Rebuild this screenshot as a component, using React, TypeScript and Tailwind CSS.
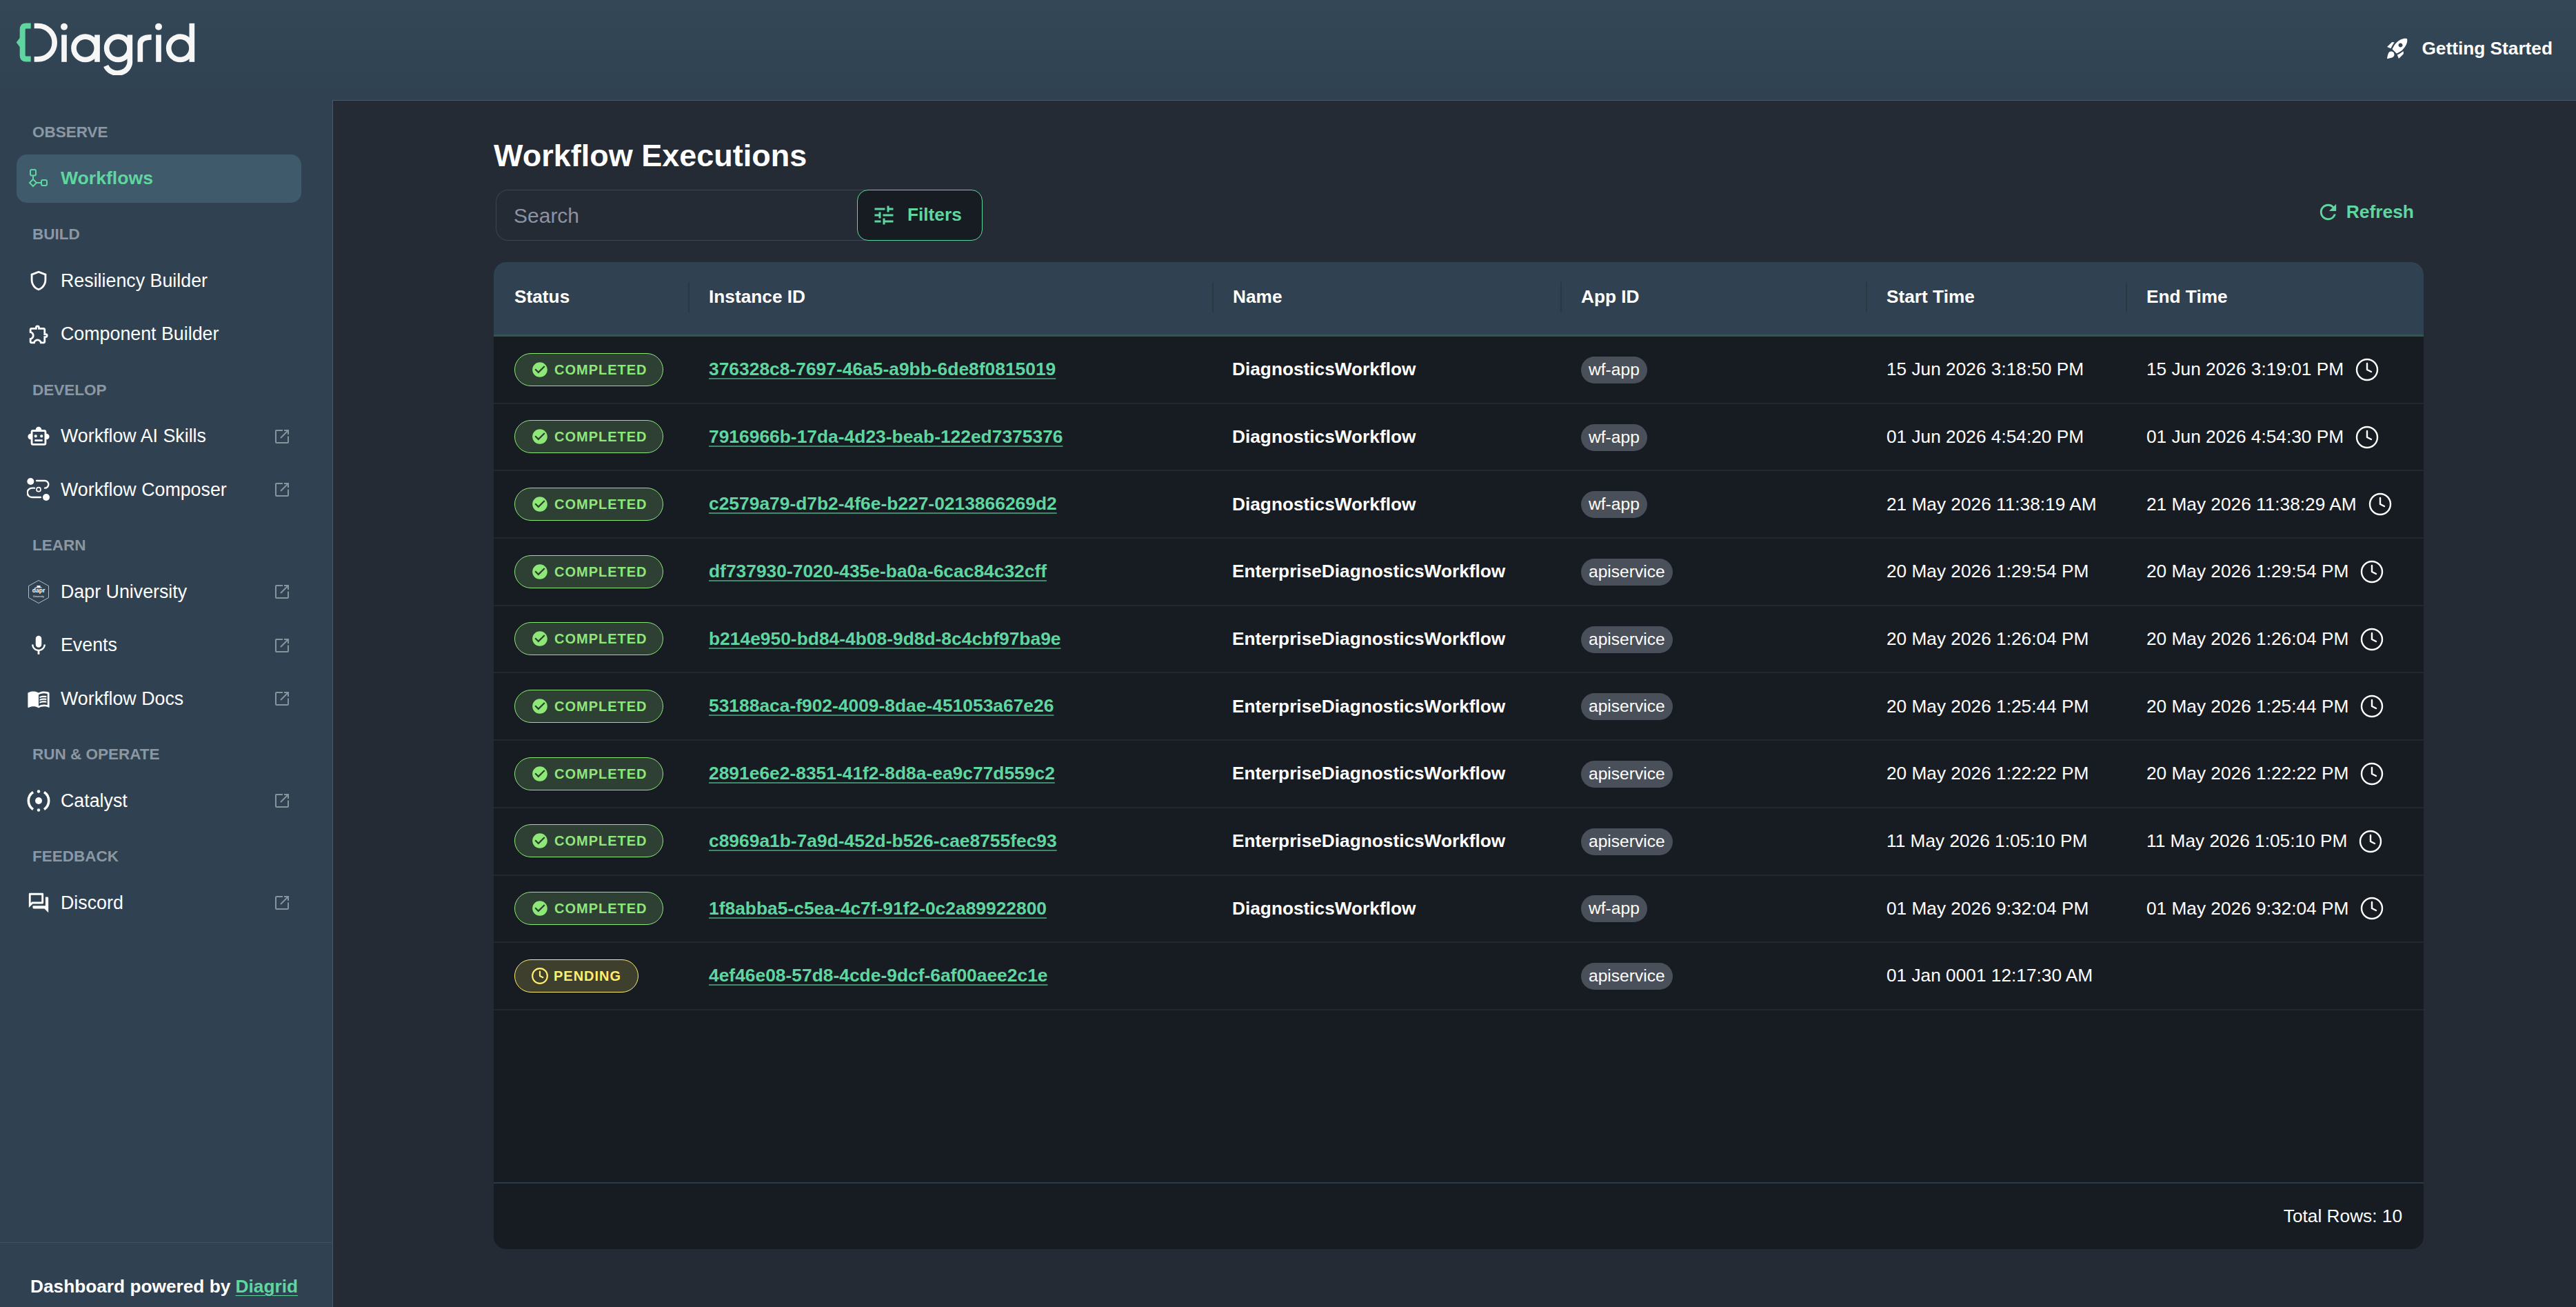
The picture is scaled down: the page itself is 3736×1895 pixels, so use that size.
import type { ReactNode } from "react"
import { Clock } from "lucide-react"
import {
  MdCheckCircle,
  MdMenuBook,
  MdMic,
  MdOutlineExtension,
  MdOutlineForum,
  MdOutlineShield,
  MdOutlineSmartToy,
  MdRefresh,
  MdRocketLaunch,
  MdTune,
} from "react-icons/md"

function DiagridLogo() {
  return (
    <svg width="262" height="77" viewBox="70 95 786 230" fill="none">
      {/* brace */}
      <path d="M135 111 H115 Q99 111 99 127 V239 Q99 255 115 255 H135" stroke="#5fd6a0" strokeWidth="24" />
      <path d="M72 183 L90 160 V206 Z" fill="#5fd6a0" />
      {/* wordmark */}
      <g stroke="#f6f6f6" strokeWidth="23">
        <path d="M150 111 H166 A72 72 0 0 1 166 256 H150" />
        <path d="M280 150 V268" />
        <circle cx="372" cy="208" r="50" />
        <path d="M424 150 V268" />
        <circle cx="515" cy="208" r="50" />
        <path d="M566 150 V262 A54 50 0 0 1 462 285" />
        <path d="M611 268 V190 Q611 160 660 160" />
        <path d="M691 150 V268" />
        <circle cx="785" cy="208" r="50" />
        <path d="M836 100 V268" />
      </g>
      <circle cx="280" cy="115" r="15" fill="#f6f6f6" />
      <circle cx="691" cy="115" r="15" fill="#f6f6f6" />
    </svg>
  )
}

function FlowIcon() {
  return (
    <svg width="30" height="30" viewBox="0 0 30 30" fill="none" stroke="#5fd6a0" strokeWidth="2">
      <rect x="3" y="2" width="8" height="8.5" rx="2" />
      <path d="M7 10.5 V16 M7 16 L12 21 L7 26 L2 21 Z M12 21 H19" />
      <rect x="19" y="17" width="8" height="8" rx="2" />
    </svg>
  )
}

function ComposerIcon() {
  return (
    <svg width="34" height="34" viewBox="0 0 102 102" fill="none" stroke="white" strokeWidth="7" strokeLinecap="round">
      <circle cx="16" cy="15" r="15" fill="white" stroke="none" />
      <circle cx="84" cy="84" r="15" fill="white" stroke="none" />
      <circle cx="51" cy="50" r="9" strokeWidth="5" />
      <path d="M42 12 H78 A16 16 0 0 1 78 44" />
      <path d="M60 84 H22 A19 19 0 0 1 22 44 H33" />
    </svg>
  )
}

function DaprIcon() {
  return (
    <svg width="30" height="34" viewBox="0 0 30 34" fill="none">
      <path d="M15 .5 L29.5 8.5 V25.5 L15 33.5 L.5 25.5 V8.5 Z" stroke="#d5dade" strokeWidth=".8" />
      <rect x="12.5" y="8" width="5" height="2.6" fill="white" />
      <rect x="10.5" y="10.4" width="9" height="1" fill="white" />
      <text x="15" y="18" textAnchor="middle" fontSize="8.5" fontWeight="700" fill="white" fontFamily="'Liberation Sans', sans-serif">dapr</text>
      <text x="15" y="24.5" textAnchor="middle" fontSize="3.6" fill="white" fontFamily="'Liberation Sans', sans-serif">University</text>
    </svg>
  )
}

function CatalystIcon() {
  return (
    <svg width="34" height="34" viewBox="0 0 34 34" fill="none" stroke="white" strokeWidth="3.6">
      <path d="M9 4.5 A15 15 0 0 0 9 29.5" />
      <path d="M25 4.5 A15 15 0 0 1 25 29.5" />
      <circle cx="17" cy="17" r="5" fill="white" stroke="none" />
      <circle cx="17" cy="3.5" r="2.2" fill="white" stroke="none" />
      <circle cx="17" cy="30.5" r="2.2" fill="white" stroke="none" />
    </svg>
  )
}

function ExternalIcon() {
  return (
    <svg width="20" height="20" viewBox="0 0 20 20" fill="none" stroke="#87939d" strokeWidth="2" className="ml-auto mr-[18px] shrink-0">
      <path d="M11 1 H2 A1 1 0 0 0 1 2 V18 A1 1 0 0 0 2 19 H18 A1 1 0 0 0 19 18 V9.5" />
      <path d="M8 12 L18.5 1.5 M13 1 H19 V7" />
    </svg>
  )
}

type NavItem = { label: string; icon: ReactNode; external?: boolean; active?: boolean }

const nav: { title: string; items: NavItem[] }[] = [
  { title: "OBSERVE", items: [{ label: "Workflows", icon: <FlowIcon />, active: true }] },
  {
    title: "BUILD",
    items: [
      { label: "Resiliency Builder", icon: <MdOutlineShield size={34} /> },
      { label: "Component Builder", icon: <MdOutlineExtension size={33} /> },
    ],
  },
  {
    title: "DEVELOP",
    items: [
      { label: "Workflow AI Skills", icon: <MdOutlineSmartToy size={36} />, external: true },
      { label: "Workflow Composer", icon: <ComposerIcon />, external: true },
    ],
  },
  {
    title: "LEARN",
    items: [
      { label: "Dapr University", icon: <DaprIcon />, external: true },
      { label: "Events", icon: <MdMic size={34} />, external: true },
      { label: "Workflow Docs", icon: <MdMenuBook size={34} />, external: true },
    ],
  },
  { title: "RUN & OPERATE", items: [{ label: "Catalyst", icon: <CatalystIcon />, external: true }] },
  { title: "FEEDBACK", items: [{ label: "Discord", icon: <MdOutlineForum size={34} />, external: true }] },
]

const rows = [
  ["376328c8-7697-46a5-a9bb-6de8f0815019", "DiagnosticsWorkflow", "wf-app", "15 Jun 2026 3:18:50 PM", "15 Jun 2026 3:19:01 PM"],
  ["7916966b-17da-4d23-beab-122ed7375376", "DiagnosticsWorkflow", "wf-app", "01 Jun 2026 4:54:20 PM", "01 Jun 2026 4:54:30 PM"],
  ["c2579a79-d7b2-4f6e-b227-0213866269d2", "DiagnosticsWorkflow", "wf-app", "21 May 2026 11:38:19 AM", "21 May 2026 11:38:29 AM"],
  ["df737930-7020-435e-ba0a-6cac84c32cff", "EnterpriseDiagnosticsWorkflow", "apiservice", "20 May 2026 1:29:54 PM", "20 May 2026 1:29:54 PM"],
  ["b214e950-bd84-4b08-9d8d-8c4cbf97ba9e", "EnterpriseDiagnosticsWorkflow", "apiservice", "20 May 2026 1:26:04 PM", "20 May 2026 1:26:04 PM"],
  ["53188aca-f902-4009-8dae-451053a67e26", "EnterpriseDiagnosticsWorkflow", "apiservice", "20 May 2026 1:25:44 PM", "20 May 2026 1:25:44 PM"],
  ["2891e6e2-8351-41f2-8d8a-ea9c77d559c2", "EnterpriseDiagnosticsWorkflow", "apiservice", "20 May 2026 1:22:22 PM", "20 May 2026 1:22:22 PM"],
  ["c8969a1b-7a9d-452d-b526-cae8755fec93", "EnterpriseDiagnosticsWorkflow", "apiservice", "11 May 2026 1:05:10 PM", "11 May 2026 1:05:10 PM"],
  ["1f8abba5-c5ea-4c7f-91f2-0c2a89922800", "DiagnosticsWorkflow", "wf-app", "01 May 2026 9:32:04 PM", "01 May 2026 9:32:04 PM"],
  ["4ef46e08-57d8-4cde-9dcf-6af00aee2c1e", "", "apiservice", "01 Jan 0001 12:17:30 AM", ""],
]

const columns = ["Status", "Instance ID", "Name", "App ID", "Start Time", "End Time"]
const gridCols = "grid grid-cols-[282px_760px_505px_443px_377px_432px]"

function StatusPill({ pending }: { pending: boolean }) {
  if (pending) {
    return (
      <span className="inline-flex h-[48px] w-[180px] items-center gap-[7px] rounded-full border border-[#ffee70] bg-[#3f3f2e] pl-[23px] text-[20px] font-bold tracking-[1px] text-[#ffee70]">
        <Clock size={26} strokeWidth={2} className="shrink-0" />
        PENDING
      </span>
    )
  }
  return (
    <span className="inline-flex h-[48px] w-[216px] items-center gap-[8px] rounded-full border border-[#8de878] bg-[#2e3f33] pl-[23px] text-[20px] font-bold tracking-[1px] text-[#8de878]">
      <MdCheckCircle size={26} className="shrink-0" />
      COMPLETED
    </span>
  )
}

export default function App() {
  return (
    <div className="flex h-screen flex-col overflow-hidden bg-[#304251] font-['Liberation_Sans',Arial,sans-serif] text-white">
      <header className="flex h-[145px] shrink-0 items-start justify-between bg-gradient-to-b from-[#334756] to-[#304251]">
        <div className="pl-[23px] pt-[32px]">
          <DiagridLogo />
        </div>
        <div className="flex items-center gap-[17px] pr-[34px] pt-[52px] text-[26.25px] font-bold leading-[36px]">
          <MdRocketLaunch size={36} />
          Getting Started
        </div>
      </header>

      <div className="flex min-h-0 flex-1">
        <aside className="flex w-[483px] shrink-0 flex-col border-r border-[#4a5a66]">
          <nav className="flex-1 pl-[24px] pr-[45px] pt-[31px]">
            {nav.map((section) => (
              <div key={section.title} className="mb-[30px]">
                <div className="mb-[18px] h-[30px] pl-[23px] text-[22.5px] font-bold leading-[31px] text-[#8b98a3]">
                  {section.title}
                </div>
                <div className="flex flex-col gap-[7.5px]">
                  {section.items.map((item) => (
                    <div
                      key={item.label}
                      className={
                        item.active
                          ? "flex h-[70px] items-center gap-[15px] rounded-[15px] bg-[#3f5a6a] pl-[15px] text-[26.6px] font-bold text-[#5fd6a0]"
                          : "flex h-[70px] items-center gap-[15px] pl-[15px] text-[26.8px] text-white"
                      }
                    >
                      <span className="flex w-[34px] shrink-0 items-center justify-center">{item.icon}</span>
                      {item.label}
                      {item.external && <ExternalIcon />}
                    </div>
                  ))}
                </div>
              </div>
            ))}
          </nav>
          <div className="h-[94px] shrink-0 border-t border-[#3d4f5d] pl-[44px] pt-[48px] text-[26.25px] font-bold leading-[30px]">
            Dashboard powered by <span className="text-[#5fd6a0] underline decoration-1 underline-offset-[4px]">Diagrid</span>
          </div>
        </aside>

        <main className="flex min-w-0 flex-1 flex-col border-t border-[#4a5a66] bg-[#242b35] pb-[84px] pl-[233px] pr-[221px]">
          <h1 className="mt-[54px] text-[45px] font-bold leading-[52px]">Workflow Executions</h1>

          <div className="mt-[23px] flex items-center pl-[3px]">
            <div className="flex h-[74px] w-[540px] items-center rounded-l-[18px] border-[1.5px] border-r-0 border-[#3c4450] pl-[25px] text-[30px] text-[#8b93a3]">
              Search
            </div>
            <button className="-ml-[16px] flex h-[74px] w-[182px] items-center gap-[16px] rounded-[16px] border-[1.5px] border-[#5fd6a0] bg-[#171c23] pl-[20px] text-[26.25px] font-bold text-[#5fd6a0]">
              <MdTune size={36} className="shrink-0" />
              Filters
            </button>
            <div className="ml-auto mb-[8px] flex items-center gap-[9px] pr-[14px] text-[26.4px] font-bold text-[#5fd6a0]">
              <MdRefresh size={35} />
              Refresh
            </div>
          </div>

          <div className="mt-[31px] flex min-h-0 flex-1 flex-col overflow-hidden rounded-[18px] bg-[#171c23]">
            <div className={`${gridCols} h-[108px] shrink-0 border-b-[3px] border-[#2c5a4c] bg-[#304251] pb-[4px] text-[26.25px] font-bold`}>
              {columns.map((col, i) => (
                <div key={col} className="flex items-center">
                  <span className={i === 0 ? "flex h-[44px] items-center pl-[30px]" : "flex h-[44px] items-center border-l-2 border-[#2a3842] pl-[28px]"}>
                    {col}
                  </span>
                </div>
              ))}
            </div>

            <div className="flex-1">
              {rows.map((row) => (
                <div key={row[0]} className={`${gridCols} h-[97.7px] items-center border-b-2 border-[#23282f] text-[26.25px]`}>
                  <div className="pl-[30px]">
                    <StatusPill pending={row[1] === ""} />
                  </div>
                  <div className="pl-[30px]">
                    <a className="text-[26.4px] font-bold text-[#5fd6a0] underline decoration-[#3f8a6c] decoration-2 underline-offset-[4px]">{row[0]}</a>
                  </div>
                  <div className="pl-[29px] font-bold">{row[1]}</div>
                  <div className="pl-[30px]">
                    <span className="inline-flex h-[39px] items-center rounded-full bg-[#4a505a] px-[11px] text-[24.6px]">{row[2]}</span>
                  </div>
                  <div className="pl-[30px]">{row[3]}</div>
                  <div className="flex items-center gap-[16px] pl-[30px]">
                    {row[4]}
                    {row[4] && <Clock size={36} strokeWidth={1.6} className="shrink-0" />}
                  </div>
                </div>
              ))}
            </div>

            <div className="flex h-[97px] shrink-0 items-center justify-end border-t-2 border-[#2c3a47] pr-[31px] text-[26.25px]">
              Total Rows: 10
            </div>
          </div>
        </main>
      </div>
    </div>
  )
}
